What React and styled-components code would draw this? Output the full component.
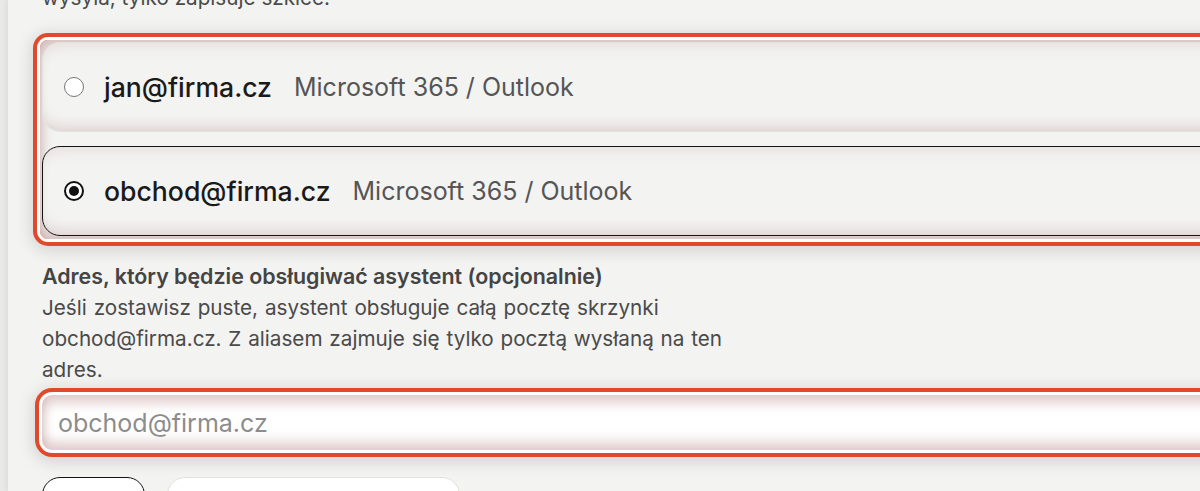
import React from 'react'
import styled, { createGlobalStyle } from 'styled-components'

const GlobalStyle = createGlobalStyle`
  html, body {
    margin: 0;
    padding: 0;
    background: #e9e9e7;
    overflow: hidden;
  }
  body {
    font-family: Inter, "Noto Sans", "Liberation Sans", sans-serif;
    color: #1c1c1c;
  }
`;

const Page = styled.div`
  padding-left: 8px;
  height: 491px;
  overflow: hidden;
`;

const Panel = styled.div`
  display: flow-root;
  background: #f3f3f1;
  height: 100%;
  padding-left: 34px;
  box-shadow: -2px 0 6px rgba(0, 0, 0, 0.06);
`;

const Hint = styled.p`
  margin: -18px 0 0;
  font-size: 20.7px;
  line-height: 31px;
  color: #4a4a4a;
`;

const focusRing = `
  box-shadow:
    0 0 0 3px #ffffff,
    0 0 0 7px #e2492c,
    0 3px 16px 9px rgba(0, 0, 0, 0.13),
    inset 0 8px 12px rgba(170, 110, 110, 0.34),
    inset 0 -8px 12px rgba(170, 110, 110, 0.34);
`;

const AccountGroup = styled.div`
  margin-top: 27px;
  margin-left: -2px;
  margin-right: -40px;
  padding: 2px 0 3px 2px;
  border-radius: 8px;
  display: flex;
  flex-direction: column;
  gap: 14px;
  ${focusRing}
`;

const AccountRow = styled.label`
  display: flex;
  align-items: center;
  height: 90px;
  box-sizing: border-box;
  padding-left: 21px;
  border-radius: 18px;
  background: #f3f3f1;
  border: ${p => (p.$active ? '1.5px solid #141414' : '1px solid #e2e2df')};
  box-shadow:
    inset 0 -12px 14px -8px rgba(150, 100, 100, 0.24),
    inset 0 10px 14px -8px rgba(150, 100, 100, 0.16);
`;

const Radio = styled.span`
  width: 20px;
  height: 20px;
  border-radius: 50%;
  box-sizing: border-box;
  flex: none;
  background: #fff;
  border: ${p => (p.$checked ? '2px solid #111' : '1px solid #767676')};
  display: flex;
  align-items: center;
  justify-content: center;
  &::after {
    content: '';
    display: ${p => (p.$checked ? 'block' : 'none')};
    width: 10px;
    height: 10px;
    border-radius: 50%;
    background: #111;
  }
`;

const Email = styled.span`
  margin-left: 20px;
  font-size: 26.6px;
  font-weight: 500;
  color: #1a1a1a;
`;

const Provider = styled.span`
  margin-left: 22px;
  font-size: 25px;
  color: #555;
`;

const FieldLabel = styled.div`
  margin-top: 22px;
  font-size: 21.4px;
  line-height: 31px;
  font-weight: 600;
  color: #444;
`;

const FieldHelp = styled.div`
  max-width: 740px;
  font-size: 20.7px;
  line-height: 31px;
  word-spacing: 1px;
  color: #4a4a4a;
`;

const InputWrap = styled.div`
  margin-top: 10px;
  margin-right: -40px;
  border-radius: 10px;
  background: #fff;
  ${focusRing}
`;

const AliasInput = styled.input`
  display: block;
  width: 100%;
  box-sizing: border-box;
  height: 55px;
  border: 0;
  outline: none;
  background: transparent;
  padding: 0 16px;
  font-family: inherit;
  font-size: 25px;
  color: #222;
  &::placeholder {
    color: #8c8c8c;
  }
`;

const Actions = styled.div`
  margin-top: 27px;
  display: flex;
  gap: 22px;
`;

const Button = styled.button`
  height: 44px;
  width: ${p => p.$w}px;
  border-radius: 18px;
  background: #fff;
  border: ${p => (p.$primary ? '1.5px solid #141414' : '1px solid #e0e0dd')};
  font-family: inherit;
  font-size: 20px;
`;

const accounts = [
  { id: 'jan', email: 'jan@firma.cz', provider: 'Microsoft 365 / Outlook' },
  { id: 'obchod', email: 'obchod@firma.cz', provider: 'Microsoft 365 / Outlook' }
];

export default function App() {
  const selected = 'obchod';

  return (
    <>
      <GlobalStyle />
      <Page>
        <Panel>
          <Hint>wysyła, tylko zapisuje szkice.</Hint>

          <AccountGroup>
            {accounts.map(acc => (
              <AccountRow key={acc.id} $active={acc.id === selected}>
                <Radio $checked={acc.id === selected} />
                <Email>{acc.email}</Email>
                <Provider>{acc.provider}</Provider>
              </AccountRow>
            ))}
          </AccountGroup>

          <FieldLabel>Adres, który będzie obsługiwać asystent (opcjonalnie)</FieldLabel>
          <FieldHelp>
            Jeśli zostawisz puste, asystent obsługuje całą pocztę skrzynki obchod@firma.cz. Z aliasem zajmuje się tylko pocztą wysłaną na ten adres.
          </FieldHelp>

          <InputWrap>
            <AliasInput placeholder="obchod@firma.cz" />
          </InputWrap>

          <Actions>
            <Button $primary $w={103} />
            <Button $w={293} />
          </Actions>
        </Panel>
      </Page>
    </>
  )
}
